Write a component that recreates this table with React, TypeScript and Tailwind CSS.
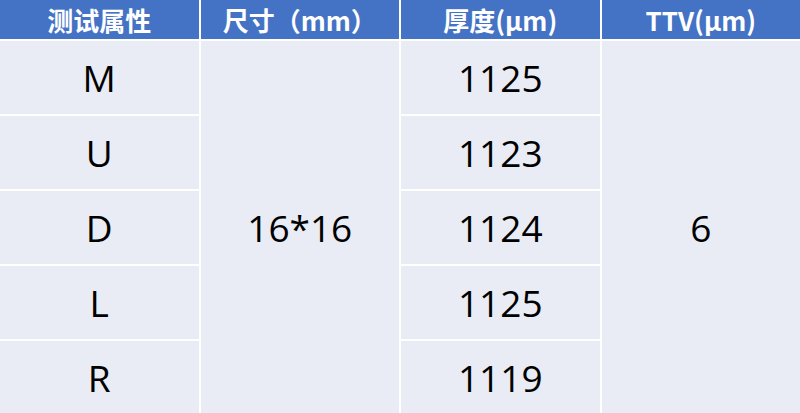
import React from "react";

const headers = ["测试属性", "尺寸（mm）", "厚度(μm)", "TTV(μm)"];
const rows = [
  ["M", "1125"],
  ["U", "1123"],
  ["D", "1124"],
  ["L", "1125"],
  ["R", "1119"],
];

export default function App() {
  return (
    <div className="w-[800px] h-[413px] overflow-hidden bg-white">
      <div
        className="grid grid-cols-4 grid-rows-[39px_repeat(5,73px)] gap-[2px] bg-white"
        style={{}}
      >
        {headers.map((h) => (
          <div
            key={h}
            className="bg-[#4472c4] text-white font-bold text-[26px] flex items-center justify-center leading-none font-['Noto_Sans_CJK_SC','Noto_Sans',sans-serif]"
          >
            {h}
          </div>
        ))}
        {rows.map(([a, b], i) => (
          <React.Fragment key={a}>
            <div
              className="bg-[#e9ebf5] text-black text-[37px] flex items-center justify-center font-['Open_Sans',sans-serif]"
              style={{ gridColumn: 1, gridRow: i + 2 }}
            >
              {a}
            </div>
            <div
              className="bg-[#e9ebf5] text-black text-[37px] flex items-center justify-center font-['Open_Sans',sans-serif]"
              style={{ gridColumn: 3, gridRow: i + 2 }}
            >
              {b}
            </div>
          </React.Fragment>
        ))}
        <div className="col-start-2 row-start-2 row-span-5 bg-[#e9ebf5] text-black text-[37px] flex items-center justify-center font-['Open_Sans',sans-serif]">
          16*16
        </div>
        <div className="col-start-4 row-start-2 row-span-5 bg-[#e9ebf5] text-black text-[37px] flex items-center justify-center font-['Open_Sans',sans-serif]">
          6
        </div>
      </div>
    </div>
  );
}
